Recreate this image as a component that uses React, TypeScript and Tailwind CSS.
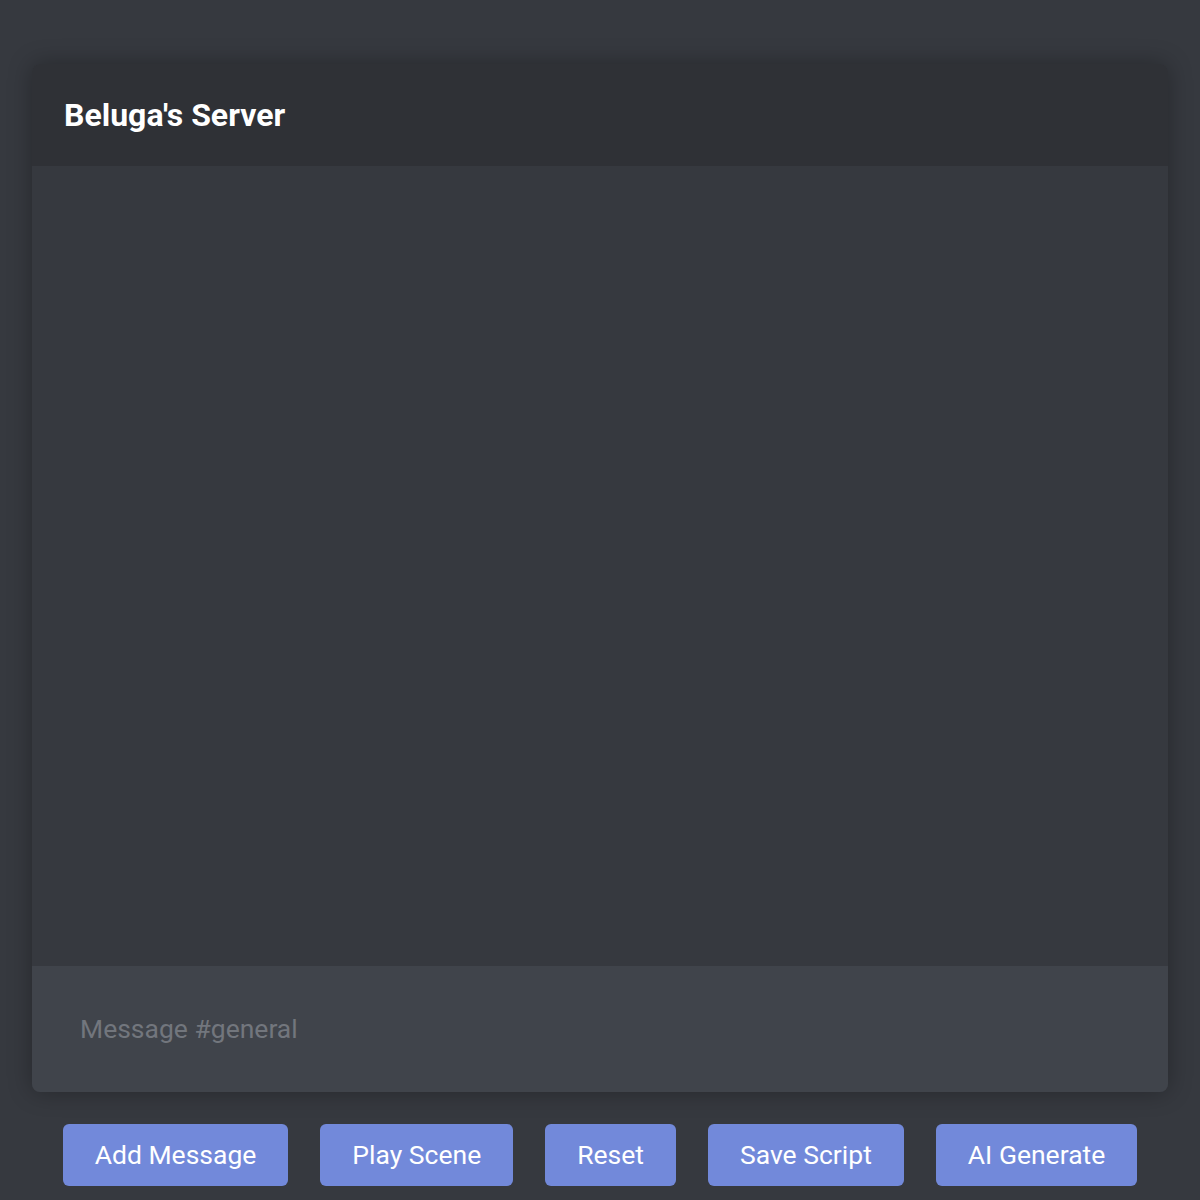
export default function App() {
  const buttons = ["Add Message", "Play Scene", "Reset", "Save Script", "AI Generate"];
  return (
    <div
      className="min-h-[1200px] bg-[#36393f] px-8 pt-16"
      style={{ fontFamily: "Roboto, 'Noto Sans', sans-serif" }}
    >
      <div className="overflow-hidden rounded-lg shadow-[0_0_24px_rgba(0,0,0,0.3)]">
        <div className="flex h-[102px] items-center bg-[#2f3136] px-8">
          <h1 className="text-[32px] font-bold text-white">Beluga's Server</h1>
        </div>
        <div className="h-[800px] bg-[#36393f]" />
        <div className="flex h-[126px] items-center bg-[#40444b] px-12">
          <span className="text-[26.5px] text-[#72767d]">Message #general</span>
        </div>
      </div>
      <div className="mt-8 flex justify-center gap-8">
        {buttons.map((b) => (
          <button
            key={b}
            className="h-[62px] rounded-md bg-[#7289da] px-8 text-[26.5px] text-white"
          >
            {b}
          </button>
        ))}
      </div>
    </div>
  );
}
